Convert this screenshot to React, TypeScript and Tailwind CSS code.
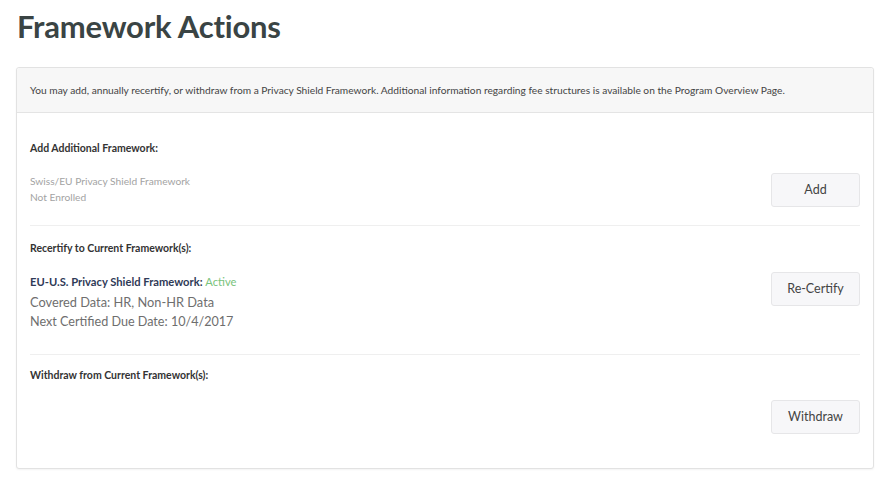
export default function App() {
  return (
    <div className="min-h-screen w-[890px] bg-white font-['Lato',sans-serif] pl-[16px] pr-[16px]">
      <h1 className="pt-[8px] pl-[1px] text-[31px] leading-[36px] font-bold text-[#3a4444] tracking-[-0.2px]">
        Framework Actions
      </h1>

      <div className="mt-[23px] border border-[#e2e2e2] rounded-[3px] shadow-[0_1px_2px_rgba(0,0,0,0.05)] bg-white">
        <div className="h-[45px] flex items-center px-[13px] bg-[#f7f7f7] border-b border-[#e4e4e4] rounded-t-[3px]">
          <p className="text-[10.2px] text-[#444] pt-[1px]">
            You may add, annually recertify, or withdraw from a Privacy Shield Framework. Additional information
            regarding fee structures is available on the Program Overview Page.
          </p>
        </div>

        <div className="px-[13px]">
          <section className="pt-[28px] pb-[18px] border-b border-[#efefef]">
            <h2 className="text-[10.5px] leading-[14px] font-bold text-[#333]">Add Additional Framework:</h2>
            <div className="mt-[18px] flex justify-between items-start">
              <div className="text-[10.2px] leading-[16px] text-[#a3a3a3]">
                <p>Swiss/EU Privacy Shield Framework</p>
                <p>Not Enrolled</p>
              </div>
              <ActionButton label="Add" />
            </div>
          </section>

          <section className="pt-[15px] pb-[22px] border-b border-[#efefef]">
            <h2 className="text-[10.5px] leading-[14px] font-bold text-[#333]">Recertify to Current Framework(s):</h2>
            <div className="mt-[17px] flex justify-between items-start">
              <div>
                <p className="text-[11.2px] leading-[20px]">
                  <span className="font-bold text-[#2f3a57]">EU-U.S. Privacy Shield Framework: </span>
                  <span className="text-[#79c37b]">Active</span>
                </p>
                <p className="text-[12.8px] leading-[20px] text-[#6e6e6e]">Covered Data: HR, Non-HR Data</p>
                <p className="text-[12.6px] leading-[20px] text-[#6e6e6e]">Next Certified Due Date: 10/4/2017</p>
              </div>
              <ActionButton label="Re-Certify" />
            </div>
          </section>

          <section className="pt-[13px] pb-[34px]">
            <h2 className="text-[10.5px] leading-[14px] font-bold text-[#333]">Withdraw from Current Framework(s):</h2>
            <div className="mt-[18px] flex justify-end">
              <ActionButton label="Withdraw" />
            </div>
          </section>
        </div>
      </div>
    </div>
  );
}

function ActionButton({ label }: { label: string }) {
  return (
    <button className="w-[89px] h-[34px] rounded-[3px] border border-[#e6e6e8] bg-[#f7f7f9] text-[12.5px] text-[#444]">
      {label}
    </button>
  );
}
